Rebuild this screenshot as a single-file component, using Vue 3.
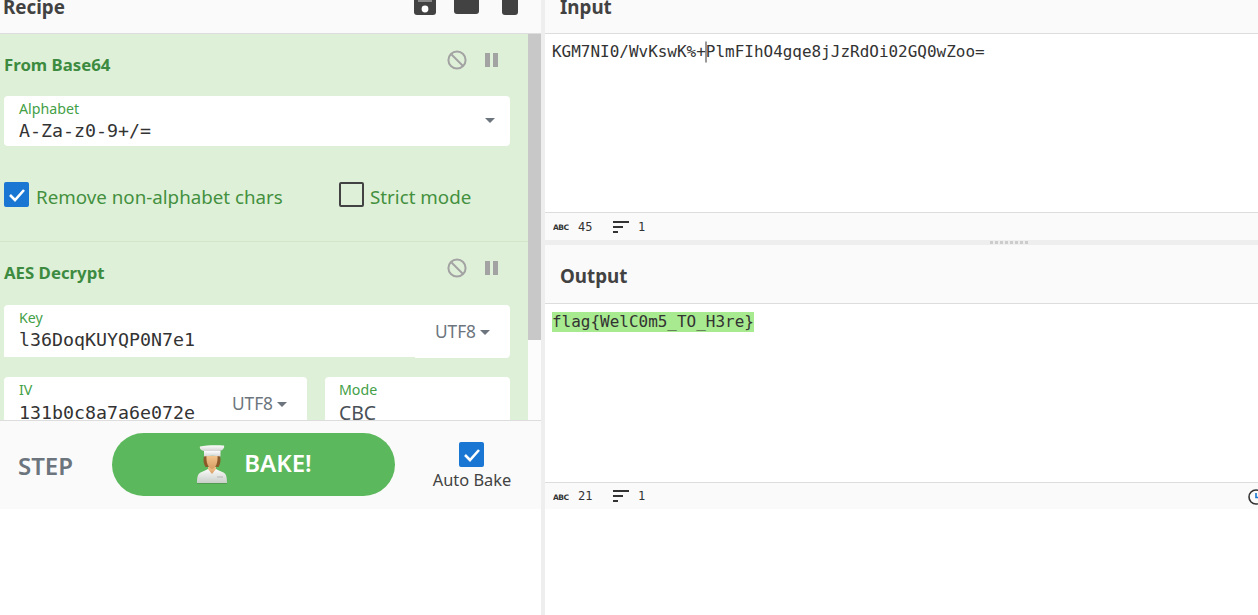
<script setup>
const stats = (chars) => ({ chars, lines: 1 })
const inputStats = stats(45)
const outputStats = stats(21)
</script>

<template>
  <div class="app">
    <section class="left">
      <header class="recipe-head">
        <h2 class="recipe-title">Recipe</h2>
        <div class="head-icons">
          <svg class="i-save" viewBox="0 0 22 15"><path d="M0 0h22v12a3 3 0 0 1-3 3H3a3 3 0 0 1-3-3z" fill="#424242"/><rect x="4" y="0" width="14" height="2" fill="#8a8a8a"/><circle cx="11" cy="9" r="3.400" fill="#fff"/></svg>
          <svg class="i-folder" viewBox="0 0 25 14"><path d="M0 0h25v11a3 3 0 0 1-3 3H3a3 3 0 0 1-3-3z" fill="#424242"/></svg>
          <svg class="i-trash" viewBox="0 0 16 15"><path d="M0 0h16v12a3 3 0 0 1-3 3H3a3 3 0 0 1-3-3z" fill="#424242"/></svg>
        </div>
      </header>

      <div class="recipe-scroll">
        <div class="ops">
          <article class="op op-first">
            <div class="op-head">
              <span class="op-name">From Base64</span>
              <span class="op-ctl">
                <svg class="ban" viewBox="0 0 20 20"><circle cx="10" cy="10" r="8.600" fill="none" stroke="#a3a3a3" stroke-width="2"/><path d="M4 4l12 12" stroke="#a3a3a3" stroke-width="2"/></svg>
                <svg class="pause" viewBox="0 0 14 14"><path d="M0 0h5v14H0zM8 0h5v14H8z" fill="#a3a3a3"/></svg>
              </span>
            </div>
            <div class="field field-alpha">
              <div class="field-main">
                <label>Alphabet</label>
                <div class="mono">A-Za-z0-9+/=</div>
              </div>
              <span class="select-caret"></span>
            </div>
            <div class="checks">
              <div class="check check-a">
                <span class="box on"><svg viewBox="0 0 25 25"><path d="M6 13l5 5 9-10" fill="none" stroke="#fff" stroke-width="2.600"/></svg></span>
                <span class="check-text">Remove non-alphabet chars</span>
              </div>
              <div class="check">
                <span class="box"></span>
                <span class="check-text">Strict mode</span>
              </div>
            </div>
          </article>

          <article class="op">
            <div class="op-head op-head-2">
              <span class="op-name">AES Decrypt</span>
              <span class="op-ctl">
                <svg class="ban" viewBox="0 0 20 20"><circle cx="10" cy="10" r="8.600" fill="none" stroke="#a3a3a3" stroke-width="2"/><path d="M4 4l12 12" stroke="#a3a3a3" stroke-width="2"/></svg>
                <svg class="pause" viewBox="0 0 14 14"><path d="M0 0h5v14H0zM8 0h5v14H8z" fill="#a3a3a3"/></svg>
              </span>
            </div>
            <div class="field field-key">
              <div class="field-main">
                <label>Key</label>
                <div class="mono">l36DoqKUYQP0N7e1</div>
              </div>
              <span class="enc">UTF8<i class="caret"></i></span>
            </div>
            <div class="iv-row">
              <div class="field field-iv">
                <div class="field-main">
                  <label>IV</label>
                  <div class="mono">131b0c8a7a6e072e</div>
                </div>
                <span class="enc">UTF8<i class="caret"></i></span>
              </div>
              <div class="field field-mode">
                <div class="field-main">
                  <label>Mode</label>
                  <div class="plain">CBC</div>
                </div>
              </div>
            </div>
          </article>
        </div>
        <div class="scrollbar"><div class="thumb"></div></div>
      </div>

      <footer class="bake">
        <span class="step">STEP</span>
        <button class="bake-btn">
          <svg class="chef" viewBox="0 0 34 40">
            <defs>
              <linearGradient id="coat" x1="0" y1="0" x2="0" y2="1"><stop offset="0" stop-color="#fbfbfb"/><stop offset="1" stop-color="#c9cfc9"/></linearGradient>
              <linearGradient id="hat" x1="0" y1="0" x2="0" y2="1"><stop offset="0" stop-color="#fdfdfd"/><stop offset="1" stop-color="#d4d4d4"/></linearGradient>
              <linearGradient id="face" x1="0" y1="0" x2="0" y2="1"><stop offset="0" stop-color="#f3c48c"/><stop offset="1" stop-color="#d79c63"/></linearGradient>
            </defs>
            <path d="M2 38c0-5 .5-9 3.500-10.500 3-1.500 6.500-2.500 8-4h7c1.500 1.500 5 2.500 8 4 3 1.500 3.500 5.500 3.500 10.500z" fill="url(#coat)"/>
            <path d="M2 38h30v1H2z" fill="#4c8a4c" opacity=".6"/>
            <path d="M13 22h8v2l-4 5-4-5z" fill="url(#face)"/>
            <path d="M9 11c-1 4-.5 8 1.500 11h3V11zM25 11c1 4 .5 8-1.500 11h-3V11z" fill="#8c5a2a"/>
            <path d="M11.500 11c-.5 6 1.500 12 5.500 13 4-1 6-7 5.500-13z" fill="url(#face)"/>
            <path d="M9 6h16.500v5.500c-5-1-11.500-1-16.500 0z" fill="url(#hat)"/>
            <path d="M5 1.500C11 0 23 0 29 .5c1 2.500-2 5.500-5 5.500H10C7 6 4 4 5 1.500z" fill="url(#hat)"/>
            <path d="M22 32h6" stroke="#b5b5b5" stroke-width="1"/>
          </svg>
          <span>BAKE!</span>
        </button>
        <div class="auto">
          <span class="box on"><svg viewBox="0 0 25 25"><path d="M6 13l5 5 9-10" fill="none" stroke="#fff" stroke-width="2.600"/></svg></span>
          <span class="auto-label">Auto Bake</span>
        </div>
      </footer>
    </section>

    <div class="divider"></div>

    <section class="right">
      <header class="io-head io-head-input"><h2>Input</h2></header>
      <div class="pane pane-input">KGM7NI0/WvKswK%+<i class="cursor"></i>PlmFIhO4gqe8jJzRdOi02GQ0wZoo=</div>
      <div class="status status-input">
        <svg class="abc" viewBox="0 0 16 7"><text x="0" y="6.500" font-size="7.500" font-weight="700" font-family="DejaVu Sans" fill="#333" textLength="16">ABC</text></svg>
        <span class="num">{{ inputStats.chars }}</span>
        <svg class="lines" viewBox="0 0 16 12"><path d="M0 1h16M0 6h10M0 11h5" stroke="#333" stroke-width="2"/></svg>
        <span class="num">{{ inputStats.lines }}</span>
      </div>
      <div class="gutter"><span class="grip"></span></div>
      <header class="io-head io-head-output"><h2>Output</h2></header>
      <div class="pane pane-output"><mark>flag{WelC0m5_TO_H3re}</mark></div>
      <div class="status status-output">
        <svg class="abc" viewBox="0 0 16 7"><text x="0" y="6.500" font-size="7.500" font-weight="700" font-family="DejaVu Sans" fill="#333" textLength="16">ABC</text></svg>
        <span class="num">{{ outputStats.chars }}</span>
        <svg class="lines" viewBox="0 0 16 12"><path d="M0 1h16M0 6h10M0 11h5" stroke="#333" stroke-width="2"/></svg>
        <span class="num">{{ outputStats.lines }}</span>
        <svg class="clock" viewBox="0 0 16 16"><circle cx="8" cy="8" r="7" fill="none" stroke="#333" stroke-width="1.600"/><path d="M8 4v4.500h3" fill="none" stroke="#1976d2" stroke-width="1.600"/></svg>
      </div>
    </section>
  </div>
</template>

<style>
html, body { margin: 0; background: #fff; overflow: hidden; }
</style>

<style scoped>
.app {
  display: flex;
  height: 615px;
  width: 1258px;
  overflow: hidden;
  font-family: "Noto Sans", "Open Sans", sans-serif;
  color: #333;
  background: #fff;
}
.left { width: 541px; flex: none; display: flex; flex-direction: column; }
.divider { width: 4px; flex: none; background: #eee; }
.right { flex: 1; min-width: 0; display: flex; flex-direction: column; position: relative; }

.recipe-head {
  height: 33px;
  flex: none;
  box-sizing: content-box;
  border-bottom: 1px solid #ddd;
  background: #fafafa;
  display: flex;
  justify-content: space-between;
  overflow: hidden;
}
h2 { margin: 0; font-size: 18.800px; font-weight: 700; line-height: 24px; color: #424242; }
.recipe-title { margin: -5px 0 0 3px; }
.head-icons { display: flex; align-items: flex-start; gap: 18px; padding-right: 23px; }
.i-save { width: 22px; height: 15px; }
.i-folder { width: 25px; height: 14px; }
.i-trash { width: 16px; height: 15px; margin-left: 5px; }

.recipe-scroll { height: 386px; flex: none; display: flex; overflow: hidden; }
.ops { width: 528px; flex: none; background: #dff0d8; overflow: hidden; }
.scrollbar { width: 13px; flex: none; background: #fcfcfc; }
.thumb { width: 13px; height: 306px; background: #c8c8c8; }

.op { padding: 0 18px 0 4px; }
.op-first { height: 207px; border-bottom: 1px solid #d3e6cb; }
.op-head { display: flex; justify-content: space-between; height: 62px; }
.op-name { margin-top: 19px; font-size: 16.800px; line-height: 24px; font-weight: 700; color: #3d8b40; }
.op-ctl { display: flex; align-items: flex-start; gap: 18px; margin-top: 16px; padding-right: 11px; }
.op-head-2 { height: 63px; }
.op-head-2 .op-name { margin-top: 19px; }
.op-head-2 .op-ctl { margin-top: 16px; }
.ban { width: 20px; height: 20px; }
.pause { width: 14px; height: 14px; margin-top: 3px; }

.field {
  background: #fff;
  border-radius: 4px;
  display: flex;
  align-items: flex-start;
  justify-content: space-between;
  box-sizing: border-box;
}
.field-main { padding: 4px 0 0 15px; min-width: 0; }
.field-alpha { height: 50px; }
.field-key { height: 53px; position: relative; border-bottom-left-radius: 0; }
.field-key::after { content: ""; position: absolute; left: 0; bottom: 0; width: 411px; height: 1px; background: #dff0d8; }
.iv-row { display: flex; gap: 18px; margin-top: 19px; }
.field-iv { width: 303px; height: 60px; }
.field-mode { width: 185px; height: 60px; }
.field-mode .field-main { padding-left: 14px; }
label { display: block; font-size: 14.200px; line-height: 18px; color: #43a047; }
.mono { font-family: "DejaVu Sans Mono", monospace; font-size: 18.270px; line-height: 24px; color: #333; white-space: nowrap; margin-top: 1px; }
.field-iv .mono { margin-top: 2px; }
.plain { font-size: 19.400px; line-height: 24px; color: #495057; margin-top: 2px; }
.select-caret { width: 0; height: 0; margin: 22px 15px 0 0; border: 5.500px solid transparent; border-top: 5px solid #6c757d; border-bottom: 0; }
.enc { font-size: 17.300px; line-height: 24px; color: #6c757d; padding: 15px 20px 0 0; white-space: nowrap; display: flex; align-items: center; }
.caret { width: 0; height: 0; margin-left: 4px; border: 5px solid transparent; border-top: 5px solid #6c757d; border-bottom: 0; }

.checks { display: flex; margin-top: 36px; }
.check { display: flex; align-items: flex-start; gap: 7px; font-size: 18.750px; line-height: 25px; color: #43903f; white-space: nowrap; }
.check-a { width: 335px; }
.check-text { padding-top: 2px; }
.check:not(.check-a) { gap: 6px; }
.box {
  width: 25px; height: 25px; flex: none; box-sizing: border-box;
  border: 2px solid #424242; border-radius: 2px; display: block;
}
.box.on { background: #1976d2; border: 0; }
.box svg { display: block; width: 25px; height: 25px; }

.bake {
  height: 88px;
  flex: none;
  border-top: 1px solid #ddd;
  background: #fafafa;
  display: flex;
  align-items: flex-start;
}
.step { margin: 31px 0 0 18px; width: 94px; font-size: 24px; line-height: 28px; font-weight: 600; color: #6c757d; }
.bake-btn {
  width: 283px; height: 63px; margin-top: 12px; border: 0; border-radius: 32px;
  background: #5cb85c; color: #fff; font-family: inherit; font-size: 24px; font-weight: 600;
  display: flex; align-items: center; justify-content: center; gap: 15px; padding: 0;
}
.chef { width: 34px; height: 40px; margin-top: 1px; }
.bake-btn span { margin-top: -4px; }
.auto { margin: 21px 0 0 38px; display: flex; flex-direction: column; align-items: center; width: 78px; }
.auto-label { font-size: 16.400px; line-height: 24px; margin-top: 1px; color: #424242; white-space: nowrap; }
.auto .box { margin-right: 1px; }

.io-head { background: #fafafa; border-bottom: 1px solid #ddd; flex: none; overflow: hidden; padding-left: 15px; }
.io-head-input { height: 33px; }
.io-head-input h2 { margin-top: -5px; }
.io-head-output { height: 58px; }
.io-head-output h2 { margin-top: 19px; }
.pane { height: 178px; flex: none; box-sizing: border-box; padding: 8px 7px 0; font-family: "DejaVu Sans Mono", monospace; font-size: 15.980px; line-height: 20px; color: #333; white-space: nowrap; }
mark { background: #a8ea90; color: #333; display: inline-block; }
.cursor { display: inline-block; width: 0; height: 20px; vertical-align: top; box-shadow: 0 0 0 0.500px #333; }

.status { flex: none; background: #fafafa; border-top: 1px solid #ddd; display: flex; align-items: center; padding-left: 8px; font-size: 12px; position: relative; overflow: hidden; }
.status-input { height: 27px; }
.status-output { height: 26px; }
.abc { width: 16px; height: 7px; }
.num { font-family: "DejaVu Sans Mono", monospace; font-size: 12px; margin-left: 9px; width: 25px; }
.lines { width: 16px; height: 12px; margin-left: 10px; }
.lines + .num { margin-left: 9px; }
.clock { position: absolute; left: 703px; top: 6px; width: 16px; height: 16px; }

.gutter { height: 5px; flex: none; background: #eee; position: relative; }
.grip { position: absolute; left: 445px; top: 1px; width: 38px; height: 3px; background: repeating-linear-gradient(90deg, #ccc 0 3px, transparent 3px 5px); }
</style>
